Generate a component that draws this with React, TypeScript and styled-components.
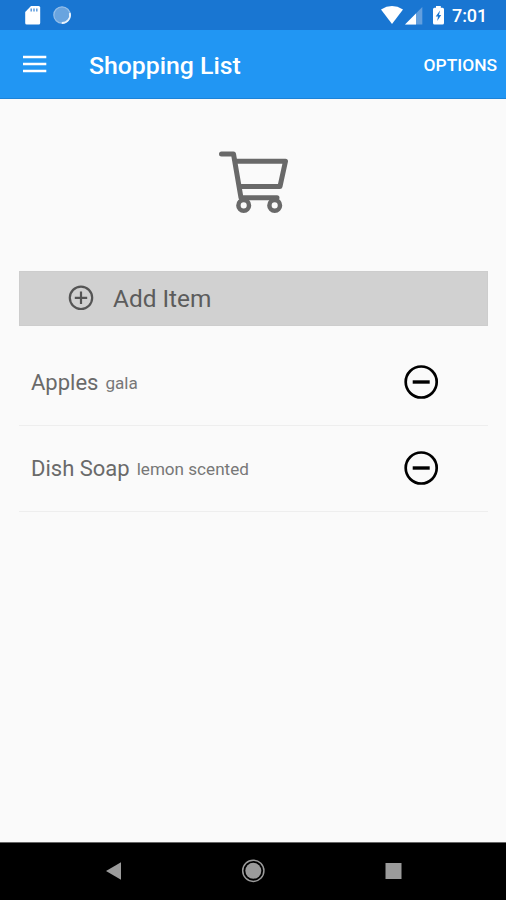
import React from "react";
import styled, { createGlobalStyle } from "styled-components";

const GlobalStyle = createGlobalStyle`
  * { box-sizing: border-box; }
  body { margin: 0; background: #fafafa; font-family: Roboto, sans-serif; }
  svg { display: block; flex: none; }
`;

const Screen = styled.div`
  display: flex;
  flex-direction: column;
  width: 506px;
  height: 900px;
  overflow: hidden;
  background: #fafafa;
`;

const StatusBar = styled.div`
  display: flex;
  justify-content: space-between;
  height: 30px;
  background: #1976d2;
  color: #fff;
`;

const Time = styled.span`
  width: 54px;
  padding-top: 1px;
  font-size: 18px;
  font-weight: 500;
  line-height: 30px;
  letter-spacing: -0.1px;
`;

const StatusRight = styled.div`
  display: flex;
`;

const AppBar = styled.header`
  display: flex;
  align-items: center;
  height: 69px;
  padding: 0 9px 0 23px;
  background: #2196f3;
  border-bottom: 1px solid #1c83d8;
  color: #fff;
`;

const Title = styled.h1`
  flex: 1;
  margin: 3px 0 0 42px;
  font-size: 24.8px;
  font-weight: 500;
  line-height: 30px;
`;

const Options = styled.button`
  margin: 1px 0 0;
  padding: 0;
  border: 0;
  background: none;
  color: #fff;
  font: 500 17.4px/24px Roboto, sans-serif;
`;

const Content = styled.main`
  flex: 1;
  padding: 0 18px 0 19px;
`;

const CartArea = styled.div`
  display: flex;
  justify-content: center;
  height: 172px;
  padding-top: 51px;
`;

const AddButton = styled.button`
  display: flex;
  align-items: center;
  gap: 19px;
  width: 100%;
  height: 55px;
  padding: 0 0 1px 48px;
  border: 1px solid #cdcdcd;
  background: #d1d1d1;
  color: #5c5c5c;
  font: 400 24.4px/30px Roboto, sans-serif;
`;

const AddLabel = styled.span`
  padding-top: 2px;
`;

const List = styled.ul`
  margin: 13px 0 0;
  padding: 0;
  list-style: none;
`;

const Row = styled.li`
  display: flex;
  align-items: center;
  height: 86.5px;
  padding: 0 49px 0 12px;
  border-bottom: 1px solid #eeeeee;
`;

const Name = styled.span`
  padding-top: 2px;
  color: #6a6a6a;
  font-size: 22px;
  line-height: 28px;
`;

const Note = styled.span`
  flex: 1;
  margin-left: 7px;
  padding-top: 2px;
  color: #777;
  font-size: 17.1px;
  line-height: 28px;
`;

const NavBar = styled.nav`
  display: flex;
  justify-content: space-between;
  height: 58px;
  padding: 16px 101px 0;
  border-top: 1px solid #666;
  background: #000;
`;

const items = [
  { name: "Apples", note: "gala" },
  { name: "Dish Soap", note: "lemon scented" },
];

const NotificationIcons = () => (
  <svg width="80" height="30" viewBox="0 0 80 30">
    <path
      d="M31 6h7.7q1.5 0 1.5 1.5v15.4q0 1.6-1.5 1.6H26.8q-1.6 0-1.6-1.6V12z"
      fill="#fff"
    />
    <path d="M31.2 8.5v3M34 8.5v3M36.8 8.5v3" stroke="#5c9bdd" strokeWidth="1.5" />
    <circle cx="62" cy="15" r="8.2" fill="#69a4df" stroke="#94bee9" strokeWidth="1.2" />
    <path d="M69.8 13a8 8 0 0 1-8 10" fill="none" stroke="#e8f2fc" strokeWidth="1.8" />
  </svg>
);

const SystemIcons = () => (
  <svg width="72" height="30" viewBox="380 0 72 30">
    <path d="M381 9.4q11-6.6 22 0L392 24z" fill="#fff" />
    <path d="M422.3 7v17.5H405z" fill="#639fde" />
    <path d="M416 13.5v11h-11z" fill="#fff" />
    <path
      d="M436 7.7V6h4.8v1.7h1.7q1.5 0 1.5 1.5v13.9q0 1.5-1.5 1.5h-8q-1.5 0-1.5-1.5V9.2q0-1.5 1.5-1.5z"
      fill="#fff"
    />
    <path d="M440 10.5l-4.3 6h2.3l-.8 4.5 4-6h-2.2z" fill="#1976d2" />
  </svg>
);

const MenuIcon = () => (
  <svg width="24" height="18" viewBox="0 0 24 18">
    <path d="M0 2h23.3M0 9h23.3M0 16h23.3" stroke="#fff" strokeWidth="2.6" />
  </svg>
);

const CartIcon = () => (
  <svg width="70" height="64" viewBox="219 150 70 64">
    <g fill="none" stroke="#696969" strokeWidth="5" strokeLinejoin="round">
      <path d="M221.5 154H233.5L241 197.8H277" strokeLinecap="round" />
      <path d="M235.5 161.3H285.5L280 186.5H240" />
      <circle cx="243.7" cy="205.4" r="5.3" strokeWidth="4.5" fill="#fafafa" />
      <circle cx="274.7" cy="205.4" r="5.3" strokeWidth="4.5" fill="#fafafa" />
    </g>
  </svg>
);

const PlusIcon = () => (
  <svg width="26" height="26" viewBox="0 0 26 26" fill="none" stroke="#555" strokeWidth="2.2">
    <circle cx="13" cy="12.8" r="11.2" />
    <path d="M6.8 12.8h12.4M13 6.6v12.4" />
  </svg>
);

const MinusIcon = () => (
  <svg width="36" height="36" viewBox="0 0 36 36" fill="none" stroke="#000">
    <circle cx="18.2" cy="18" r="15.5" strokeWidth="2.7" />
    <path d="M9.7 18h17" strokeWidth="3.4" />
  </svg>
);

const BackIcon = () => (
  <svg width="24" height="24" viewBox="0 0 24 24">
    <path d="M5 12L20 3.3V20.7z" fill="#9b9b9b" />
  </svg>
);

const HomeIcon = () => (
  <svg width="24" height="24" viewBox="0 0 24 24">
    <circle cx="12.3" cy="11.8" r="8" fill="#9b9b9b" />
    <circle cx="12.3" cy="11.8" r="10.6" fill="none" stroke="#9b9b9b" strokeWidth="1.5" />
  </svg>
);

const RecentIcon = () => (
  <svg width="24" height="24" viewBox="0 0 24 24">
    <rect x="4.5" y="4" width="16" height="16" fill="#9b9b9b" />
  </svg>
);

export default function App() {
  return (
    <>
      <GlobalStyle />
      <Screen>
        <StatusBar>
          <NotificationIcons />
          <StatusRight>
            <SystemIcons />
            <Time>7:01</Time>
          </StatusRight>
        </StatusBar>
        <AppBar>
          <MenuIcon />
          <Title>Shopping List</Title>
          <Options>OPTIONS</Options>
        </AppBar>
        <Content>
          <CartArea>
            <CartIcon />
          </CartArea>
          <AddButton>
            <PlusIcon />
            <AddLabel>Add Item</AddLabel>
          </AddButton>
          <List>
            {items.map((item) => (
              <Row key={item.name}>
                <Name>{item.name}</Name>
                <Note>{item.note}</Note>
                <MinusIcon />
              </Row>
            ))}
          </List>
        </Content>
        <NavBar>
          <BackIcon />
          <HomeIcon />
          <RecentIcon />
        </NavBar>
      </Screen>
    </>
  );
}
